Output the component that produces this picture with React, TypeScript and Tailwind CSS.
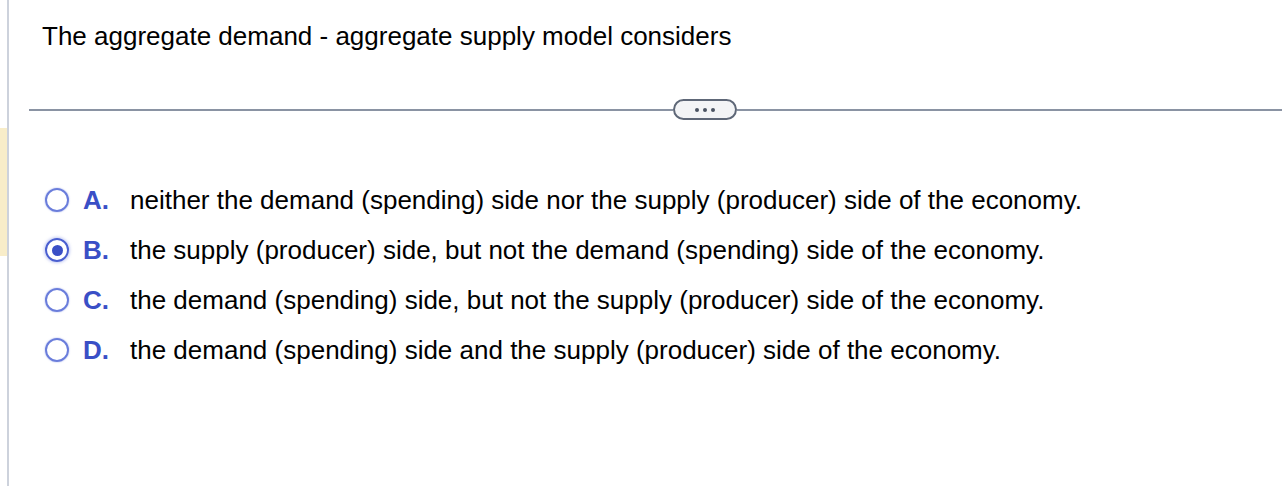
import React from "react";

const OPTIONS = [
  { key: "A", text: "neither the demand (spending) side nor the supply (producer) side of the economy." },
  { key: "B", text: "the supply (producer) side, but not the demand (spending) side of the economy." },
  { key: "C", text: "the demand (spending) side, but not the supply (producer) side of the economy." },
  { key: "D", text: "the demand (spending) side and the supply (producer) side of the economy." },
];

const SELECTED = "B";

function Radio({ checked }: { checked: boolean }) {
  return (
    <span
      className={
        checked
          ? "flex h-[24px] w-[24px] shrink-0 items-center justify-center rounded-full border-2 border-[#4a5fd0] shadow-[0_0_3px_1px_rgba(90,110,220,0.35)]"
          : "flex h-[24px] w-[24px] shrink-0 items-center justify-center rounded-full border-2 border-[#6a7ddb] shadow-[0_0_1.5px_rgba(90,110,220,0.7)]"
      }
    >
      {checked && <span className="h-[11px] w-[11px] rounded-full bg-[#3a4fc6]" />}
    </span>
  );
}

export default function App() {
  return (
    <div
      className="flex h-[486px] w-full overflow-hidden bg-white text-black"
      style={{ fontFamily: '"Liberation Sans", Arial, sans-serif' }}
    >
      {/* left gutter with highlight */}
      <div className="flex w-[7px] shrink-0 flex-col">
        <div className="h-[128px]" />
        <div className="h-[128px] bg-[#f8edc9]" />
      </div>
      <div className="w-[2px] shrink-0 bg-[#cdd2dc]" />

      <main className="flex-1">
        <h1 className="pl-[33px] pt-[24px] text-[26px] leading-[24px]">
          The aggregate demand - aggregate supply model considers
        </h1>

        {/* divider with expand pill */}
        <div className="ml-[20px] mt-[51px] flex items-center">
          <div className="h-[2px] flex-1 bg-[#8a93a3]" />
          <button className="flex h-[21px] w-[64px] items-center justify-center gap-[4px] rounded-full border-2 border-[#5e6777] bg-[#f3f4f6]">
            <span className="h-[4px] w-[4px] rounded-full bg-[#4b5362]" />
            <span className="h-[4px] w-[4px] rounded-full bg-[#4b5362]" />
            <span className="h-[4px] w-[4px] rounded-full bg-[#4b5362]" />
          </button>
          <div className="h-[2px] w-[545px] bg-[#8a93a3]" />
        </div>

        <ul className="mt-[55px] pl-[36px]">
          {OPTIONS.map((o) => (
            <li key={o.key} className="flex h-[50px] items-center text-[26px]">
              <Radio checked={o.key === SELECTED} />
              <span className="ml-[14px] w-[47px] font-bold text-[#3a4fc6]">{o.key}.</span>
              <span>{o.text}</span>
            </li>
          ))}
        </ul>
      </main>
    </div>
  );
}
